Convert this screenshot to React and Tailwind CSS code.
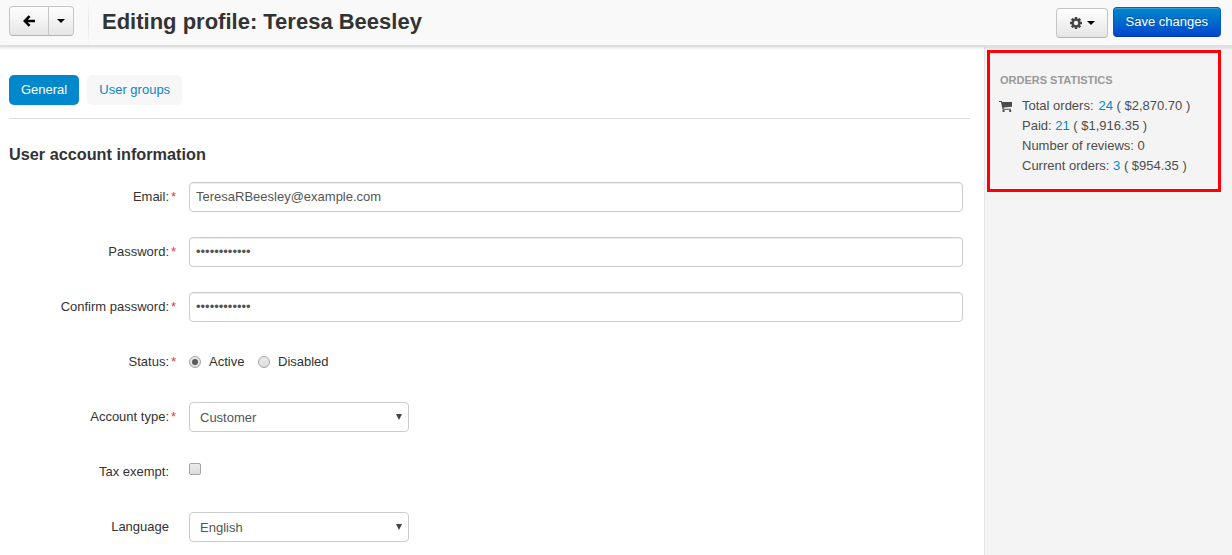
import React from "react";

const BUTTON =
  "flex items-center justify-center border border-[#c5c5c5] border-b-[#b3b3b3] bg-linear-to-b from-white to-[#e6e6e6]";

function Caret() {
  return (
    <svg width="8" height="4" viewBox="0 0 8 4" className="block">
      <path d="M0 0h8L4 4z" fill="#000" />
    </svg>
  );
}

function ArrowLeft() {
  return (
    <svg width="12" height="12" viewBox="0 0 12 12" className="block">
      <path d="M6.6 1.1 1.8 6l4.8 4.9M2.4 6H12" fill="none" stroke="#000" strokeWidth="2.5" />
    </svg>
  );
}

function Gear() {
  return (
    <svg width="12" height="12" viewBox="0 0 12 12" className="block">
      <g fill="#444">
        <rect x="4.7" y="0" width="2.6" height="12" rx=".3" />
        <rect x="4.7" y="0" width="2.6" height="12" rx=".3" transform="rotate(45 6 6)" />
        <rect x="4.7" y="0" width="2.6" height="12" rx=".3" transform="rotate(90 6 6)" />
        <rect x="4.7" y="0" width="2.6" height="12" rx=".3" transform="rotate(135 6 6)" />
        <circle cx="6" cy="6" r="4.5" />
      </g>
      <circle cx="6" cy="6" r="2.2" fill="#f5f5f5" />
    </svg>
  );
}

function Cart() {
  return (
    <svg width="13" height="12" viewBox="0 0 13 12" className="block">
      <path d="M0 1h2.8L3.2 2H13v4.7L4.6 7.6l.1 1.2H12v1H3.6L2 2H0z" fill="#4a4a4a" />
      <rect x="3.6" y="10" width="2" height="2" rx=".6" fill="#4a4a4a" />
      <rect x="10.2" y="10" width="2" height="2" rx=".6" fill="#4a4a4a" />
    </svg>
  );
}

function Row({ label, required, children }) {
  return (
    <div className="mb-[25px] flex h-[30px]">
      <div className="flex w-[169px] justify-end pt-[5px] leading-5 text-[#333]">
        <span>{label}</span>
      </div>
      <span className="w-[20px] pt-[5px] pl-[2px] text-[13px] leading-5 text-[#ee3344]">{required ? "*" : ""}</span>
      {children}
    </div>
  );
}

function TextField({ type, value }) {
  return (
    <input
      type={type}
      defaultValue={value}
      className="h-[30px] w-[774px] rounded-[4px] border border-[#ccc] bg-white px-[6px] pb-[2px] text-[13px] leading-5 text-[#555] shadow-[inset_0_1px_1px_rgba(0,0,0,0.075)] outline-none"
    />
  );
}

function Dropdown({ value }) {
  return (
    <div className="flex h-[30px] w-[220px] items-center justify-between rounded-[4px] border border-[#ccc] bg-white pr-[6px] pl-[10px] text-[#555]">
      <span className="pt-[2px] leading-5">{value}</span>
      <svg width="6" height="6" viewBox="0 0 6 6" className="mb-px block">
        <path d="M0 0h6L3 6z" fill="#444" />
      </svg>
    </div>
  );
}

function Radio({ checked }) {
  return (
    <span className="flex h-[12px] w-[12px] items-center justify-center rounded-full border border-[#a5a5a5] bg-linear-to-b from-[#ececec] to-[#dcdcdc]">
      {checked && <span className="h-[6px] w-[6px] rounded-full bg-[#5a5a5a]" />}
    </span>
  );
}

export default function App() {
  return (
    <div className="flex h-[555px] w-[1232px] flex-col overflow-hidden bg-white font-['Liberation_Sans',Arial,sans-serif] text-[13px] leading-5 text-[#333]">
      <header className="z-10 flex h-[47px] shrink-0 items-start border-b-2 border-[#dfdfdf] bg-[#f9f9f9] pr-[11px] pl-[9px] shadow-[0_1px_3px_rgba(0,0,0,0.12)]">
        <div className="mt-[6px] flex">
          <button aria-label="Back" className={`${BUTTON} h-[30px] w-[40px] rounded-l-[4px]`}>
            <ArrowLeft />
          </button>
          <button aria-label="More" className={`${BUTTON} -ml-px h-[30px] w-[26px] rounded-r-[4px]`}>
            <Caret />
          </button>
        </div>
        <div className="ml-[14px] h-[45px] w-px bg-linear-to-b from-[#f9f9f9] via-[#e6e6e6] to-[#f9f9f9]" />
        <h1 className="ml-[13px] flex-1 pt-[7px] text-[22px] leading-[30px] font-bold">
          Editing profile: Teresa Beesley
        </h1>
        <button aria-label="Settings" className={`${BUTTON} mt-[8px] h-[30px] w-[52px] gap-[5px] rounded-[4px]`}>
          <Gear />
          <Caret />
        </button>
        <button className="mt-[7px] ml-[5px] h-[30px] w-[108px] rounded-[4px] border border-[#0061bd] border-b-[#003c9e] bg-linear-to-b from-[#0088cc] to-[#0044cc] pr-[0.4px] text-white shadow-[inset_0_1px_0_rgba(255,255,255,0.2)] [text-shadow:0_-1px_0_rgba(0,0,0,0.25)]">
          Save changes
        </button>
      </header>

      <div className="flex flex-1">
        <main className="w-[984px] pl-[9px]">
          <nav className="mt-[28px] flex w-[961px] gap-[8px] border-b border-[#ddd] pb-[13px]">
            <a className="h-[30px] w-[70px] rounded-[5px] bg-[#0088cc] text-center leading-[30px] text-white">General</a>
            <a className="h-[30px] w-[95px] rounded-[5px] bg-[#f7f7f7] pl-[12.3px] leading-[30px] text-[#0a84c8]">
              User groups
            </a>
          </nav>
          <h2 className="mt-[25px] mb-[18px] text-[16.25px] leading-5 font-bold">User account information</h2>

          <form className="-ml-[9px]">
            <Row label="Email:" required>
              <TextField type="text" value="TeresaRBeesley@example.com" />
            </Row>
            <Row label="Password:" required>
              <TextField type="password" value="abcdefghijkl" />
            </Row>
            <Row label="Confirm password:" required>
              <TextField type="password" value="abcdefghijkl" />
            </Row>
            <Row label="Status:" required>
              <div className="flex h-[30px] items-center">
                <Radio checked />
                <span className="ml-[8px] w-[49px]">Active</span>
                <Radio />
                <span className="ml-[8px]">Disabled</span>
              </div>
            </Row>
            <Row label="Account type:" required>
              <Dropdown value="Customer" />
            </Row>
            <Row label="Tax exempt:">
              <span className="mt-[6px] h-[12px] w-[12px] rounded-[2px] border border-[#a5a5a5] bg-linear-to-b from-[#ececec] to-[#dcdcdc]" />
            </Row>
            <Row label="Language">
              <Dropdown value="English" />
            </Row>
          </form>
        </main>

        <aside className="flex-1 border-l border-[#e5e5e5] bg-[#f4f4f4] pt-[3px] pl-[2px]">
          <section className="h-[142px] w-[234px] border-3 border-[#ff0008] pt-[17px] pl-[9px] text-[#4d4d4d]">
            <h3 className="pl-px text-[11px] leading-5 font-bold text-[#999]">ORDERS STATISTICS</h3>
            <div className="mt-[6px] flex">
              <div className="w-[23px] pt-[4px]">
                <Cart />
              </div>
              <div className="leading-5 whitespace-pre">
                <div>
                  Total orders: <a className="ml-[1.3px] text-[#0088cc]">24</a> ( $2,870.70 )
                </div>
                <div>
                  Paid: <a className="text-[#0088cc]">21</a> ( $1,916.35 )
                </div>
                <div>Number of reviews: 0</div>
                <div>
                  Current orders: <a className="text-[#0088cc]">3</a> ( $954.35 )
                </div>
              </div>
            </div>
          </section>
        </aside>
      </div>
    </div>
  );
}
